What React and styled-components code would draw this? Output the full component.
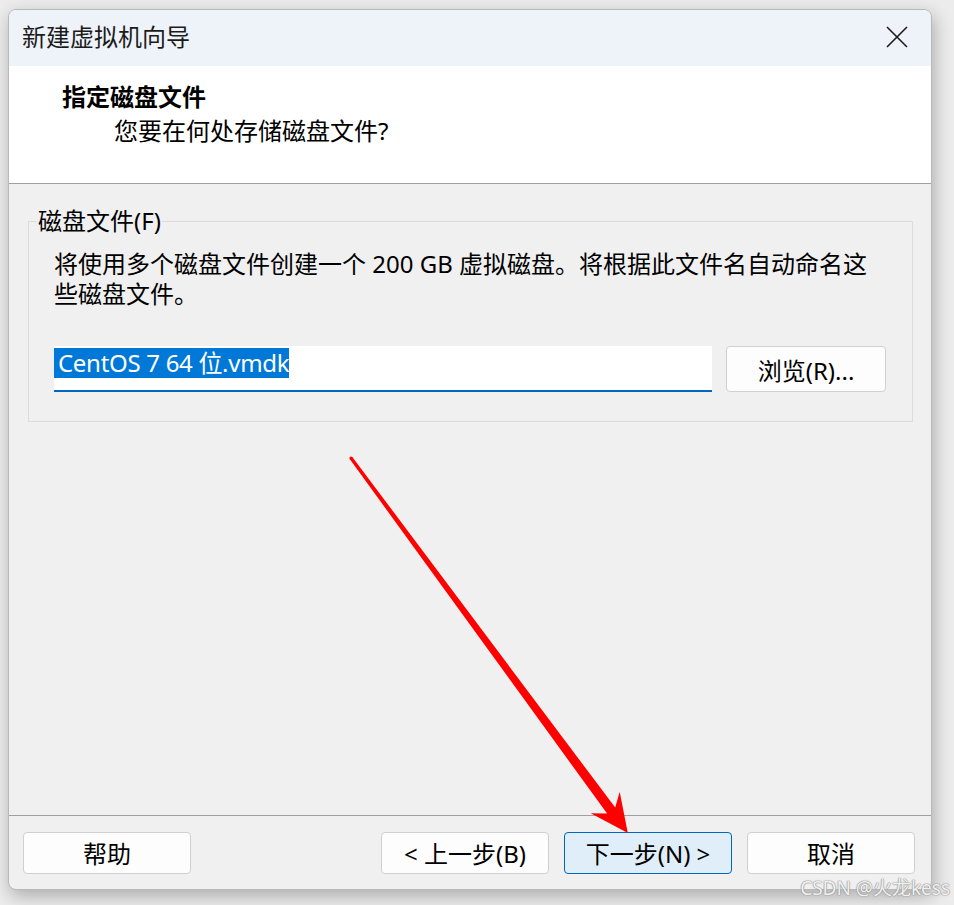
import React from 'react';
import styled, { createGlobalStyle } from 'styled-components';

const GlobalStyle = createGlobalStyle`
  html, body {
    margin: 0;
    padding: 0;
    background: #ececec;
  }
  body {
    font-family: "Noto Sans", "Noto Sans CJK SC", sans-serif;
    color: #000;
  }
`;

const Page = styled.div`
  position: relative;
  width: 954px;
  height: 905px;
  padding: 9px 0 0 8px;
  box-sizing: border-box;
  overflow: hidden;
`;

const Window = styled.div`
  width: 924px;
  height: 881px;
  box-sizing: border-box;
  border: 1px solid #b9b9b9;
  border-radius: 8px;
  overflow: hidden;
  display: flex;
  flex-direction: column;
  background: #f0f0f0;
  box-shadow: 2px 6px 18px rgba(0, 0, 0, 0.28);
`;

const TitleBar = styled.div`
  height: 56px;
  flex-shrink: 0;
  display: flex;
  align-items: center;
  justify-content: space-between;
  padding: 0 22px 2px 13px;
  box-sizing: border-box;
  background: #eef3f9;
`;

const TitleText = styled.div`
  font-size: 24px;
  line-height: 30px;
  color: #1b1b1b;
`;

const CloseButton = styled.div`
  width: 24px;
  height: 24px;
  display: flex;
  align-items: center;
  justify-content: center;
`;

const Header = styled.div`
  height: 118px;
  flex-shrink: 0;
  box-sizing: border-box;
  padding: 14px 0 0 53px;
  background: #fff;
  border-bottom: 1px solid #a0a0a0;
`;

const HeaderTitle = styled.div`
  font-size: 24px;
  line-height: 34px;
  font-weight: 700;
`;

const HeaderSub = styled.div`
  font-size: 24px;
  line-height: 34px;
  padding-left: 52px;
`;

const Body = styled.div`
  flex: 1;
  padding: 22px 18px 0 19px;
`;

const GroupBox = styled.fieldset`
  margin: 0;
  padding: 13px 26px 29px 25px;
  border: 1px solid #dcdcdc;
  min-width: 0;
`;

const Legend = styled.legend`
  font-size: 24px;
  line-height: 30px;
  padding: 0 1px;
  margin-left: -17px;
`;

const Description = styled.div`
  font-size: 24px;
  line-height: 30px;
  margin-right: -20px;
`;

const FileRow = styled.div`
  display: flex;
  align-items: flex-start;
  gap: 14px;
  margin-top: 37px;
`;

const TextField = styled.div`
  flex: 1;
  height: 46px;
  box-sizing: border-box;
  background: #fff;
  border-bottom: 2px solid #0067c0;
  padding-top: 2px;
  font-size: 24px;
  line-height: 30px;
  white-space: nowrap;
`;

const Selected = styled.span`
  display: inline-block;
  background: #0078d7;
  color: #fff;
  padding: 0 0 0 4px;
  letter-spacing: -0.3px;
`;

const Button = styled.div`
  width: ${p => p.$width || 168}px;
  height: ${p => p.$height || 42}px;
  box-sizing: border-box;
  display: flex;
  align-items: center;
  justify-content: center;
  font-size: 24px;
  border-radius: 4px;
  border: 1px solid ${p => (p.$primary ? '#0067c0' : '#d0d0d0')};
  background: ${p => (p.$primary ? '#e0eef9' : '#fdfdfd')};
  white-space: nowrap;
`;

const Footer = styled.div`
  height: 74px;
  flex-shrink: 0;
  box-sizing: border-box;
  border-top: 1px solid #a0a0a0;
  display: flex;
  align-items: center;
  padding: 0 16px 0 14px;
`;

const Spacer = styled.div`
  flex: 1;
`;

const ButtonGroup = styled.div`
  display: flex;
  gap: 15px;
`;

const Overlay = styled.svg`
  position: absolute;
  left: 0;
  top: 0;
  pointer-events: none;
`;

const Watermark = styled.div`
  position: absolute;
  right: 4px;
  bottom: 6px;
  font-size: 19px;
  line-height: 22px;
  color: rgba(255, 255, 255, 0.9);
  text-shadow: 0 0 1px #8a8a8a, 0 0 1px #8a8a8a, 0 0 2px #b0b0b0;
`;

function Arrow() {
  // tapered red arrow pointing at the "next" button
  const sx = 351, sy = 458;
  const ux = 0.594, uy = 0.805;
  const nx = -0.805, ny = 0.594;
  const pt = (along, perp) =>
    `${(sx + ux * along + nx * perp).toFixed(1)},${(sy + uy * along + ny * perp).toFixed(1)}`;
  const points = [
    pt(0, 1.6),
    pt(438, 5),
    pt(428, 18),
    pt(466, 0),
    pt(428, -18),
    pt(438, -5),
    pt(0, -1.6),
  ].join(' ');
  return (
    <Overlay width="954" height="905" viewBox="0 0 954 905">
      <polygon points={points} fill="#ff0000" />
      <circle cx={sx} cy={sy} r="1.6" fill="#ff0000" />
    </Overlay>
  );
}

export default function App() {
  return (
    <Page>
      <GlobalStyle />
      <Window>
        <TitleBar>
          <TitleText>新建虚拟机向导</TitleText>
          <CloseButton>
            <svg width="22" height="22" viewBox="0 0 22 22">
              <path d="M1 1 L21 21 M21 1 L1 21" stroke="#1b1b1b" strokeWidth="1.6" />
            </svg>
          </CloseButton>
        </TitleBar>

        <Header>
          <HeaderTitle>指定磁盘文件</HeaderTitle>
          <HeaderSub>您要在何处存储磁盘文件?</HeaderSub>
        </Header>

        <Body>
          <GroupBox>
            <Legend>磁盘文件(F)</Legend>
            <Description>
              将使用多个磁盘文件创建一个 200 GB 虚拟磁盘。将根据此文件名自动命名这<br />
              些磁盘文件。
            </Description>
            <FileRow>
              <TextField>
                <Selected>CentOS 7 64 位.vmdk</Selected>
              </TextField>
              <Button $width={160} $height={46}>浏览(R)...</Button>
            </FileRow>
          </GroupBox>
        </Body>

        <Footer>
          <Button>帮助</Button>
          <Spacer />
          <ButtonGroup>
            <Button>&lt; 上一步(B)</Button>
            <Button $primary>下一步(N) &gt;</Button>
            <Button>取消</Button>
          </ButtonGroup>
        </Footer>
      </Window>
      <Arrow />
      <Watermark>CSDN @火龙kess</Watermark>
    </Page>
  );
}
